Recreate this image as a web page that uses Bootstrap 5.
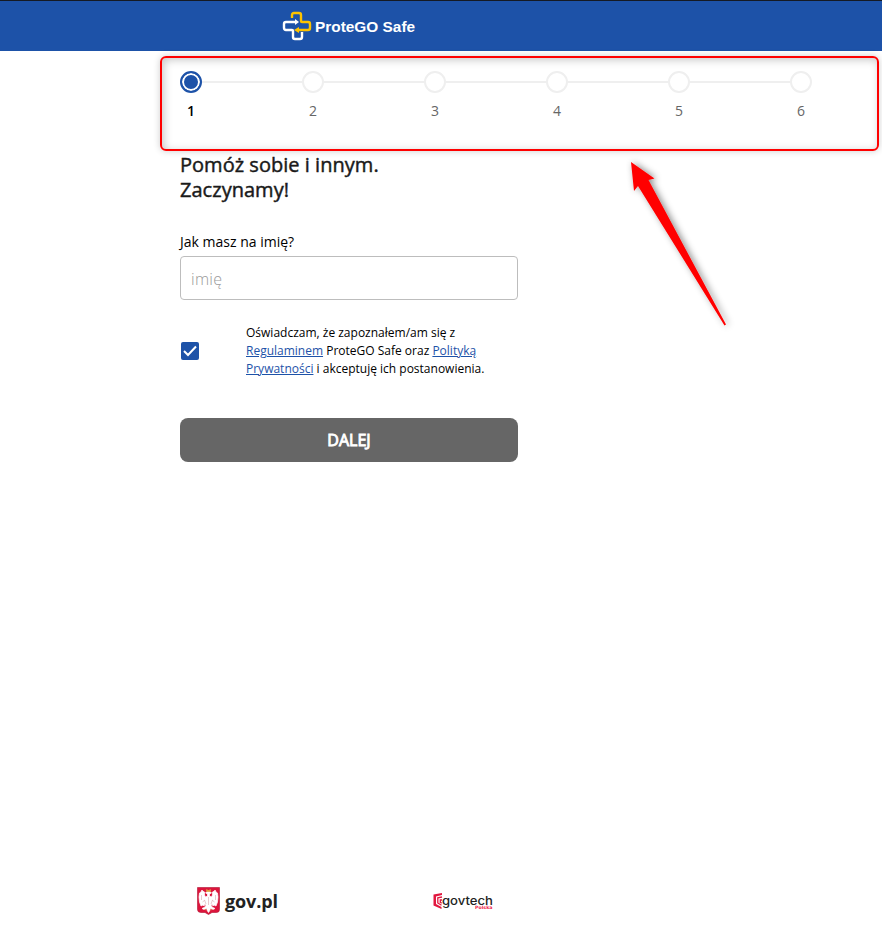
<!DOCTYPE html>
<html lang="pl">
<head>
<meta charset="utf-8">
<meta name="viewport" content="width=device-width, initial-scale=1">
<title>ProteGO Safe</title>
<link href="https://cdn.jsdelivr.net/npm/bootstrap@5.3.0/dist/css/bootstrap.min.css" rel="stylesheet">
<style>
body{font-family:"Open Sans","Noto Sans",sans-serif;color:#1a1a1a;font-size:14px;min-height:931px;overflow:hidden}
.topbar{height:51px;background:#1d52a8;border-top:1px solid #151a24;padding:0 0 0 282px}
.brand{font:bold 15.4px/20px "Liberation Sans",Arial,sans-serif;padding-top:1px;margin-left:3px}
.page{padding-left:180px;height:880px}
.steps{width:632px;padding-top:20px;height:101px}
.step{width:22px}
.dot{width:22px;height:22px;border:2px solid #efefef;border-radius:50%;background:#fff}
.step.active .dot{border-color:#1d52a8;background:#1d52a8;box-shadow:inset 0 0 0 2px #fff}
.num{margin-top:8px;line-height:20px;color:#666}
.step.active .num{color:#000;font-weight:600}
.line{height:2px;background:#efefef;margin-top:10px}
.headline{font-size:20px;line-height:25px;font-weight:400;-webkit-text-stroke:.45px #1a1a1a;letter-spacing:.03px;margin:0}
.signup{width:338px}
.name-label{margin-top:30px;line-height:20px;color:#000}
.name-input{height:44px;margin-top:4px;border:1px solid #bdbdbd;border-radius:4px;padding:2px 10px 0;font-size:16px;font-weight:300;letter-spacing:.3px;color:#000}
.name-input::placeholder{color:#999;opacity:1}
.consent{margin-top:24px;height:54px}
.tick{width:18px;height:18px;border-radius:2px;background:#1d52a8;margin-left:1px}
.consent-text{margin-left:47px;font-size:12px;line-height:18px;color:#000;white-space:nowrap}
.consent-text a{color:#1d52a8}
.next{margin-top:40px;height:44px;border-radius:8px;background:#666;border:0;color:#fff;font-size:16px;font-weight:400;-webkit-text-stroke:.9px #fff;padding:0}
.partners{padding:0 0 16px 17px}
.gov{font-size:18px;font-weight:700;line-height:28px;color:#222;margin-left:4px;letter-spacing:-.1px;width:208px}
.frame{left:160px;top:56px;width:719px;height:95px;border:2px solid #f00;border-radius:6px;box-shadow:0 0 7px rgba(0,0,0,.2),inset 2px 2px 8px rgba(0,0,0,.22)}
.pointer{left:615px;top:145px}
</style>
</head>
<body class="position-relative">
<header class="topbar d-flex align-items-center">
<svg width="30" height="30" viewBox="0 0 30 30" fill="none" stroke-width="2.4" stroke-linejoin="round"><path d="M10 7V4q0-2 2-2h5q2 0 2 2v6q0 1 1 1h6q2 0 2 2v4q0 2-2 2H15" stroke="#fdc300"/><path d="M20 21v5q0 2-2 2h-5q-2 0-2-2v-6q0-1-1-1H4q-2 0-2-2v-4q0-2 2-2h10" stroke="#fff"/><path d="m13 8 4 3-4 3z" fill="#fff"/><path d="m17 16-5 3 5 3z" fill="#fdc300"/></svg>
<span class="brand text-white">ProteGO Safe</span>
</header>
<div class="page d-flex flex-column">
<div class="steps d-flex">
<div class="step active text-center"><div class="dot"></div><div class="num">1</div></div><div class="line flex-fill"></div>
<div class="step text-center"><div class="dot"></div><div class="num">2</div></div><div class="line flex-fill"></div>
<div class="step text-center"><div class="dot"></div><div class="num">3</div></div><div class="line flex-fill"></div>
<div class="step text-center"><div class="dot"></div><div class="num">4</div></div><div class="line flex-fill"></div>
<div class="step text-center"><div class="dot"></div><div class="num">5</div></div><div class="line flex-fill"></div>
<div class="step text-center"><div class="dot"></div><div class="num">6</div></div>
</div>
<form class="signup d-flex flex-column">
<h1 class="headline">Pomóż sobie i innym.<br>Zaczynamy!</h1>
<label class="name-label" for="imie">Jak masz na imię?</label>
<input class="name-input w-100" id="imie" type="text" placeholder="imię">
<div class="consent d-flex align-items-center">
<svg class="tick flex-shrink-0" viewBox="0 0 18 18" fill="none"><path d="m3 9 4 4 8-8.500" stroke="#fff" stroke-width="2"/></svg>
<div class="consent-text">Oświadczam, że zapoznałem/am się z<br><a href="#">Regulaminem</a> ProteGO Safe oraz <a href="#">Polityką<br>Prywatności</a> i akceptuję ich postanowienia.</div>
</div>
<button class="next btn w-100" type="button">DALEJ</button>
</form>
<footer class="partners d-flex align-items-center mt-auto">
<svg width="24" height="28" viewBox="0 0 24 28"><path d="M.5.500h22v22q0 3-3 3h-4.500l-3.500 2-3.500-2H4q-3.500 0-3.500-3z" fill="#dc143c" stroke="#b01330" stroke-width=".6"/><g transform="translate(-.5 0)"><path d="M10 5l2-1 2 1 1 1-2 1v2l2 1 1-2V5l2-1 .5-1 1 2 1.500 1 .5 4-.5 5-1.500 4-2-1-1 1-1-2-1 1 1 2 3 1.500-2 1-2.500-1L13 24l-1 1.500-1-1.500-1-2.500-2.500 1-2-1 3-1.500 1-2-1-1-1 2-1-1-2 1L3 15l-.5-5L3 6l1.500-1 1-2L6 4l2 1v3l1 2 2-1V7L9 6z" fill="#fff" stroke="#fff" stroke-width=".7"/><path d="M5 8v5m14-5v5m-11 0 1.500 4m6.500-4-1.500 4m-8.500-2 2.500-2m7 0 2.500 2M12 10v8" stroke="#e0b4ba" stroke-width=".7"/><path d="M10 2.500l2 1 2-1v2h-4zM8 22.500l2 .5m6-.5-2 .5" fill="#dca53c" stroke="#dca53c" stroke-width=".6"/></g></svg>
<span class="gov">gov.pl</span>
<svg class="flex-shrink-0" width="62" height="20" viewBox="0 0 62 20"><path d="M9 2 .5 3.500v11l8 3.500v-2L3 13V5.500L9 4z" fill="#e2173f"/><path d="M9 6 4.800 6.800V12l3.700 2.200M9 9H7.300v2.500l1.700.5" stroke="#e2173f" stroke-width="1.300" fill="none"/><text x="9" y="13.500" font-family="Inter" font-size="12" font-weight="500" fill="#222" textLength="51" lengthAdjust="spacingAndGlyphs">govtech</text><text x="42" y="18" font-family="DejaVu Sans" font-weight="bold" font-size="4.500" fill="#ef2349" textLength="17.500" lengthAdjust="spacingAndGlyphs">Polska</text></svg>
</footer>
</div>
<div class="frame position-absolute pe-none"></div>
<svg class="pointer position-absolute pe-none" width="130" height="195" viewBox="0 0 130 195"><defs><filter id="shade" x="-20%" y="-20%" width="140%" height="140%"><feDropShadow dx="2" dy="0" stdDeviation="3.500" flood-opacity=".45"/></filter></defs><path filter="url(#shade)" d="M16 17 39.500 33.500 33.500 35 111 179.500 109.500 180.500 23 41 19 46z" fill="#f00"/></svg>
<script src="https://cdn.jsdelivr.net/npm/bootstrap@5.3.0/dist/js/bootstrap.bundle.min.js"></script>
</body>
</html>
